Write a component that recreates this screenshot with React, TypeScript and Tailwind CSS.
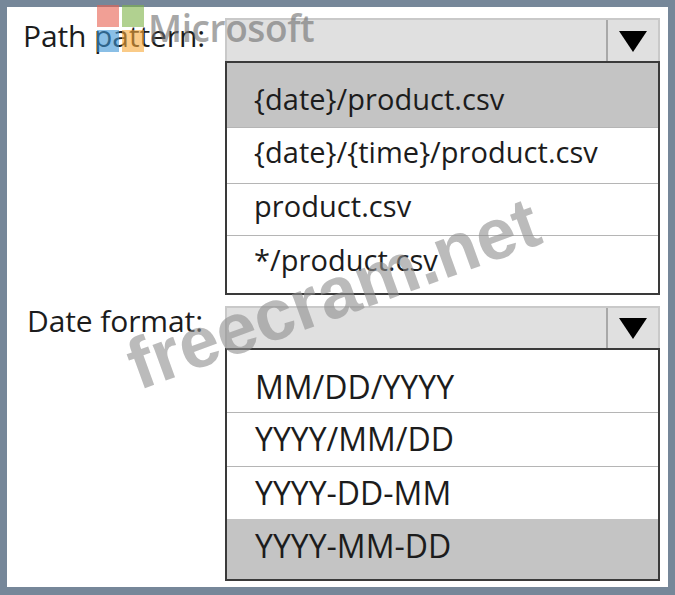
import React from 'react';

const FONT = "font-['Open_Sans','Noto_Sans',sans-serif]";

interface PickerProps {
  label: string;
  labelClass: string;
  options: { text: string; height: string; nudge?: string; selected?: boolean }[];
  textClass: string;
  headerClass: string;
}

const Picker: React.FC<PickerProps> = ({ label, labelClass, options, textClass, headerClass }) => (
  <div className="flex items-start">
    <div className={`w-[207px] shrink-0 text-[30px] leading-[36px] tracking-[-0.1px] text-[#1c1c1c] ${labelClass}`}>{label}</div>
    <div className="w-[435px] shrink-0">
      <div className={`flex border-2 border-b-0 border-[#c9c9c9] bg-[#e0e0e0] ${headerClass}`}>
        <div className="flex-1 border-r-2 border-[#a8a8a8]" />
        <div className="flex w-[50px] items-center justify-center">
          <svg width="30" height="24" viewBox="0 0 30 24"><path d="M1 2h28L15 23z" fill="#000" /></svg>
        </div>
      </div>
      <div className="border-2 border-[#3a3a3a]">
        {options.map((o, i) => (
          <div
            key={o.text}
            className={`flex items-center ${o.height} ${o.nudge ?? ''} ${o.selected ? 'bg-[#c4c4c4]' : 'bg-white'} ${i < options.length - 1 && !options[i + 1].selected ? 'border-b border-[#b5b5b5]' : ''}`}
          >
            <span className={`text-[#1c1c1c] ${textClass}`}>{o.text}</span>
          </div>
        ))}
      </div>
    </div>
  </div>
);

export default function App() {
  return (
    <div className={`relative h-[595px] w-[675px] overflow-hidden bg-[#768799] p-[7px] ${FONT}`}>
      <div className="flex h-[580px] w-[661px] flex-col gap-[11px] bg-white pl-[11px] pt-[11px]">
        <Picker
          label="Path pattern:"
          labelClass="pl-[5px]"
          headerClass="h-[43px]"
          textClass="pl-[27px] text-[29px] tracking-[0.05px]"
          options={[
            { text: '{date}/product.csv', height: 'h-[65px]', nudge: 'pt-[8px]', selected: true },
            { text: '{date}/{time}/product.csv', height: 'h-[56px]', nudge: 'pb-[7px]' },
            { text: 'product.csv', height: 'h-[52px]', nudge: 'pb-[7px]' },
            { text: '*/product.csv', height: 'h-[57px]', nudge: 'pb-[9px]' },
          ]}
        />
        <Picker
          label="Date format:"
          labelClass="pl-[9px] -mt-[3px]"
          headerClass="h-[42px]"
          textClass="pl-[28px] text-[32px]"
          options={[
            { text: 'MM/DD/YYYY', height: 'h-[63px]', nudge: 'pt-[12px]' },
            { text: 'YYYY/MM/DD', height: 'h-[54px]', nudge: 'pb-[2px]' },
            { text: 'YYYY-DD-MM', height: 'h-[52px]' },
            { text: 'YYYY-MM-DD', height: 'h-[60px]', nudge: 'pb-[6px]', selected: true },
          ]}
        />
      </div>

      {/* ms logo watermark */}
      <div className="pointer-events-none absolute left-[97px] top-[5px] flex items-start gap-[3px] opacity-60">
        <div className="grid grid-cols-[22px_22px] grid-rows-[22px_22px] gap-[3px]">
          <div className="bg-[#e9604f]" />
          <div className="bg-[#7eb348]" />
          <div className="bg-[#3d96d6]" />
          <div className="bg-[#f7a93a]" />
        </div>
        <span className="ml-[1px] font-['Open_Sans',sans-serif] text-[37px] font-semibold leading-[46px] tracking-[-0.4px] text-[#6e6e6e]">Microsoft</span>
      </div>

      <div className="pointer-events-none absolute left-[117px] top-[257px] origin-center -rotate-[20deg] whitespace-nowrap font-['Liberation_Sans',sans-serif] text-[72px] font-bold leading-none text-[#8f8f8f] opacity-60">
        freecram.net
      </div>
    </div>
  );
}
